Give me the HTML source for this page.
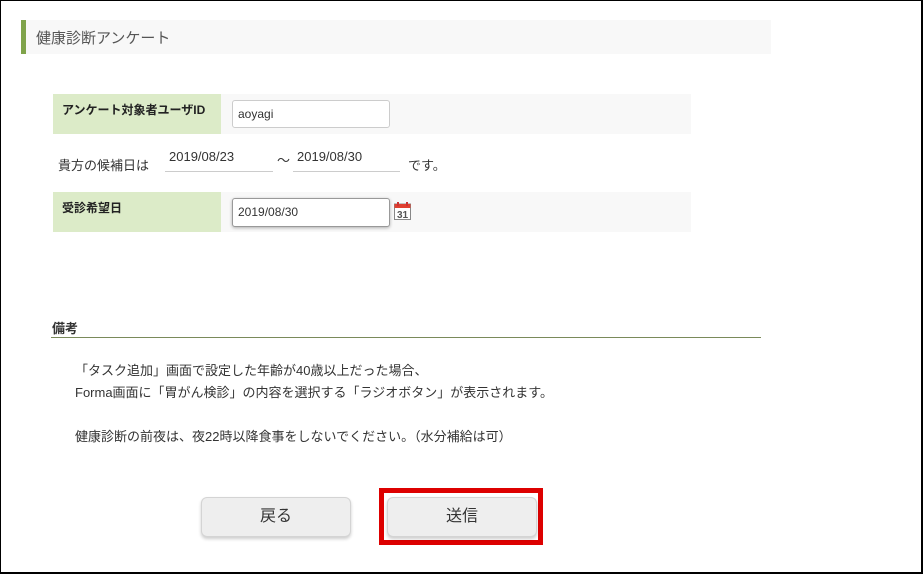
<!DOCTYPE html>
<html><head><meta charset="utf-8"><style>
*{margin:0;padding:0;box-sizing:border-box}
body{width:923px;height:574px;background:#fff;font-family:"Liberation Sans","Noto Sans CJK JP",sans-serif;color:#333;position:relative;overflow:hidden}
.frame{position:absolute;left:0;top:0;width:923px;height:574px;border:1px solid #000;border-right-width:2px;border-bottom-width:2px}
.a{position:absolute}
.hdr{left:21px;top:20px;width:750px;height:34px;background:#f8f8f8;border-left:5px solid #7fa34a}
.hdr span{position:absolute;left:10px;top:7px;font-size:15px;color:#555}
.lab{background:#dcebc8;font-weight:bold;font-size:12px;color:#222;padding:7px 0 0 9px}
.bg{background:#f8f8f8}
.inp{background:#fff;border:1px solid #ccc;border-radius:3px;font-size:12px;padding:0 5px;line-height:26px}
.t{font-size:13px;color:#333;white-space:nowrap}
.ul{border-bottom:1px solid #ccc;font-size:13px;padding-left:4px}
.btn{width:150px;height:40px;background:#eee;border:1px solid #d4d4d4;border-radius:6px;box-shadow:0 2px 3px rgba(0,0,0,.2);font-size:16px;color:#333;text-align:center;line-height:38px}
</style></head><body>
<div class="frame"></div>
<div class="a hdr"><span>健康診断アンケート</span></div>

<div class="a bg" style="left:221px;top:94px;width:470px;height:40px"></div>
<div class="a lab" style="left:53px;top:94px;width:168px;height:40px">アンケート対象者ユーザID</div>
<div class="a inp" style="left:232px;top:100px;width:158px;height:28px">aoyagi</div>

<div class="a t" style="left:58px;top:155px">貴方の候補日は</div>
<div class="a ul" style="left:165px;top:149px;width:108px;height:23px">2019/08/23</div>
<div class="a t" style="left:277px;top:150px">～</div>
<div class="a ul" style="left:293px;top:149px;width:107px;height:23px">2019/08/30</div>
<div class="a t" style="left:408px;top:155px">です。</div>

<div class="a bg" style="left:221px;top:192px;width:470px;height:40px"></div>
<div class="a lab" style="left:53px;top:192px;width:168px;height:40px">受診希望日</div>
<div class="a inp" style="left:232px;top:198px;width:158px;height:29px;border-color:#999;box-shadow:0 1px 3px rgba(0,0,0,.3)">2019/08/30</div>
<svg class="a" style="left:394px;top:202px" width="17" height="18" viewBox="0 0 17 18">
<rect x="0.5" y="2" width="16" height="15.5" fill="#fff" stroke="#888"/>
<rect x="0.5" y="2" width="16" height="4" fill="#e04030"/>
<rect x="3" y="0" width="2" height="4" fill="#c33"/><rect x="12" y="0" width="2" height="4" fill="#c33"/>
<text x="8.5" y="16" font-size="10" font-weight="bold" text-anchor="middle" fill="#555" font-family="Liberation Sans">31</text>
</svg>

<div class="a" style="left:52px;top:318px;font-size:13px;font-weight:bold;color:#333">備考</div>
<div class="a" style="left:51px;top:337px;width:710px;height:1px;background:#7a8a5a"></div>
<div class="a t" style="left:75px;top:360px;line-height:22px">「タスク追加」画面で設定した年齢が40歳以上だった場合、<br>Forma画面に「胃がん検診」の内容を選択する「ラジオボタン」が表示されます。<br><br>健康診断の前夜は、夜22時以降食事をしないでください。（水分補給は可）</div>

<div class="a btn" style="left:201px;top:497px">戻る</div>
<div class="a" style="left:379px;top:488px;width:164px;height:57px;border:5px solid #d00"></div>
<div class="a btn" style="left:387px;top:497px">送信</div>
</body></html>
